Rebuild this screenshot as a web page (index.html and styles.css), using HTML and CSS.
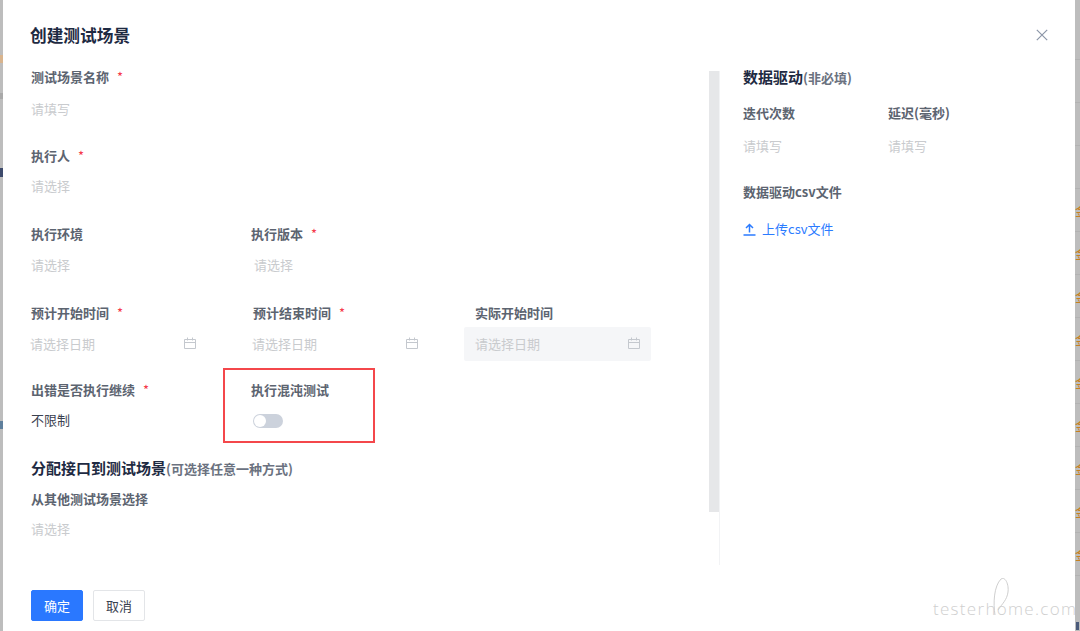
FILE: index.html
```html
<!DOCTYPE html>
<html lang="zh">
<head>
<meta charset="utf-8">
<title>创建测试场景</title>
<link rel="stylesheet" href="styles.css">
</head>
<body>
<div class="page">
  <div class="strip strip-left">
    <i class="mark mark-a"></i><i class="mark mark-b"></i><i class="mark mark-c"></i><i class="mark mark-d"></i>
  </div>
  <div class="modal">
    <header class="modal-head">
      <h1 class="title">创建测试场景</h1>
      <svg class="close" width="12" height="12" viewBox="0 0 12 12"><path d="M.8.8l10.400 10.400M11.200.8L.8 11.200"/></svg>
    </header>
    <div class="modal-body">
      <main class="form">
        <div class="row row-a">
          <div class="field"><div class="label">测试场景名称<span class="req">*</span></div><div class="ph ph-tall">请填写</div></div>
        </div>
        <div class="row row-b">
          <div class="field"><div class="label">执行人<span class="req">*</span></div><div class="ph">请选择</div></div>
        </div>
        <div class="row row-c">
          <div class="field wide"><div class="label">执行环境</div><div class="ph ph-mid">请选择</div></div>
          <div class="field wide"><div class="label">执行版本<span class="req">*</span></div><div class="ph ph-mid shift">请选择</div></div>
        </div>
        <div class="row row-d">
          <div class="field date-field"><div class="label">预计开始时间<span class="req">*</span></div>
            <div class="date"><span>请选择日期</span><svg class="cal" width="12" height="12" viewBox="0 0 12 12"><path d="M.5 2.500h11v9H.5zM.5 5.500h11M3.500.5v3M8.500.5v3"/></svg></div></div>
          <div class="field date-field"><div class="label">预计结束时间<span class="req">*</span></div>
            <div class="date"><span>请选择日期</span><svg class="cal" width="12" height="12" viewBox="0 0 12 12"><path d="M.5 2.500h11v9H.5zM.5 5.500h11M3.500.5v3M8.500.5v3"/></svg></div></div>
          <div class="field date-field"><div class="label">实际开始时间</div>
            <div class="date disabled"><span>请选择日期</span><svg class="cal" width="12" height="12" viewBox="0 0 12 12"><path d="M.5 2.500h11v9H.5zM.5 5.500h11M3.500.5v3M8.500.5v3"/></svg></div></div>
        </div>
        <div class="row row-e">
          <div class="field wide"><div class="label">出错是否执行继续<span class="req">*</span></div><div class="value">不限制</div></div>
          <div class="field wide highlighted"><div class="label">执行混沌测试</div><div class="switch"><span class="knob"></span></div></div>
        </div>
        <h2 class="section">分配接口到测试场景<small>(可选择任意一种方式)</small></h2>
        <div class="field"><div class="label">从其他测试场景选择</div><div class="ph">请选择</div></div>
      </main>
      <div class="scroll"><div class="thumb"></div></div>
      <aside class="side">
        <h2 class="section side-title">数据驱动<small>(非必填)</small></h2>
        <div class="side-row">
          <div class="side-col"><div class="label">迭代次数</div><div class="ph ph-side">请填写</div></div>
          <div class="side-col"><div class="label">延迟(毫秒)</div><div class="ph ph-side">请填写</div></div>
        </div>
        <div class="label">数据驱动csv文件</div>
        <div class="upload">
          <svg width="13" height="13" viewBox="0 0 13 13"><path d="M6.500 9.500V2M3 5l3.500-3.500L10 5M.5 12h12"/></svg>
          <span>上传csv文件</span>
        </div>
      </aside>
    </div>
    <footer class="foot">
      <button class="btn primary">确定</button>
      <button class="btn">取消</button>
    </footer>
    <div class="watermark">
      <svg class="loop" width="20" height="40" viewBox="0 0 20 40"><path d="M5 37C3 25 4 8 11 1c5-3 8 7 7 13-1 8-6 12-10 18"/></svg>
      <span>testerhome.com</span>
    </div>
  </div>
  <div class="strip strip-right">
    <div class="back-row"></div><div class="back-row"></div><div class="back-row"></div><div class="back-row"></div>
    <div class="back-row"><b>金</b></div><div class="back-row"><b>金</b></div><div class="back-row"><b>金</b></div>
    <div class="back-row"><b>金</b></div><div class="back-row"><b>金</b></div><div class="back-row"><b>金</b></div>
    <div class="back-row"><b>金</b></div><div class="back-row"><b>金</b></div><div class="back-row"><b>金</b></div>
    <i class="mark mark-e"></i>
  </div>
</div>
</body>
</html>
```

FILE: styles.css
```css
* { box-sizing: border-box; }
html, body { margin: 0; height: 100%; }
body {
  font-family: "Noto Sans CJK SC", "Noto Sans", sans-serif;
  font-size: 13px;
  color: #5c6470;
  background: #bdbdbd;
  overflow: hidden;
}
.page { display: flex; height: 631px; }
.strip { background: #bdbdbd; overflow: hidden; flex: none; }
.strip-left { width: 3px; display: flex; flex-direction: column; }
.strip-right { width: 5px; padding-top: 17px; }
.mark { display: block; flex: none; }
.mark-a { height: 8px; margin-top: 55px; background: #d8b48e; }
.mark-b { height: 6px; margin-top: 30px; background: #a9a9a9; }
.mark-c { height: 9px; margin-top: 69px; background: #3d4a6b; }
.mark-d { height: 8px; margin-top: 244px; background: #5f7f9c; }
.mark-e { width: 3px; height: 8px; margin: 46px 0 0 1px; background: #4a5a7a; }
.back-row { height: 43px; border-bottom: 1px solid #b2b2b2; padding-top: 14px; line-height: 14px; overflow: hidden; }
.back-row b { display: block; width: 14px; font-size: 14px; font-weight: 400; color: #c8801f; }

.modal { position: relative; flex: 1; background: #fff; display: flex; flex-direction: column; overflow: hidden; }
.modal-head { height: 70px; padding: 23px 27px 0 27px; display: flex; justify-content: space-between; align-items: flex-start; }
.title { margin: 0; font-size: 16.700px; line-height: 24px; font-weight: 700; color: #1e2a42; }
.close { margin-top: 6px; fill: none; stroke: #8c96a8; stroke-width: 1.200; }

.modal-body { flex: 1; display: flex; min-height: 0; }
.form { width: 706px; padding-left: 28px; flex: none; }
.row { display: flex; }
.row-a { height: 79px; }
.row-b { height: 78px; }
.row-c { height: 79px; }
.row-d { height: 77px; }
.row-e { height: 74px; }
.field { display: flex; flex-direction: column; }
.wide { width: 220px; }
.date-field { width: 222px; }
.label { font-size: 13px; line-height: 14px; font-weight: 700; color: #5c6470; white-space: nowrap; }
.req { color: #f5384a; margin-left: 8px; font-weight: 400; }
.ph { margin-top: 13px; line-height: 20px; color: #c9cbce; }
.ph-tall { margin-top: 15px; }
.ph-mid { margin-top: 14px; }
.ph-side { margin-top: 16px; }
.shift { margin-left: 3px; }
.date {
  margin: 7px 0 0 -11px; width: 187px; height: 34px; padding: 0 11px 2px;
  display: flex; align-items: center; justify-content: space-between;
  color: #c9cbce; border-radius: 2px;
}
.date span { margin-left: -1px; }
.date.disabled span { margin-left: 0; }
.date.disabled { background: #f5f6f8; }
.cal { fill: none; stroke: #c4c8ce; stroke-width: 1; }
.value { margin-top: 13px; line-height: 20px; color: #3a4150; }

.highlighted { position: relative; }
.highlighted::before {
  content: ""; box-sizing: border-box; position: absolute; left: -28px; top: -15px; width: 152px; height: 75px;
  border: 2px solid #f4474b;
}
.switch {
  margin: 17px 0 0 2px; width: 30px; height: 14px; border-radius: 7px; background: #ccd2dc; position: relative;
}
.knob { position: absolute; left: 1px; top: 1px; width: 12px; height: 12px; border-radius: 50%; background: #fff; }

.section { margin: 0; font-size: 15px; line-height: 20px; font-weight: 700; color: #1e2a42; white-space: nowrap; }
.section small { font-size: 13px; font-weight: 700; color: #6b7280; }
.form > .section { margin: 1px 0 13px; }

.scroll { width: 11px; flex: none; margin-top: 1px; border-right: 1px solid #f2f3f5; height: 494px; }
.thumb { width: 10px; height: 441px; background: #e6e7e9; }

.side { padding-left: 23px; flex: 1; }
.side-title { margin-top: -3px; margin-bottom: 18px; }
.side-row { display: flex; height: 79px; }
.side-col { width: 145px; }
.upload { display: flex; align-items: center; gap: 6px; margin-top: 20px; line-height: 20px; color: #2b7bff; }
.upload svg { fill: none; stroke: #2b7bff; stroke-width: 1.500; flex: none; }

.foot { height: 66px; padding: 25px 0 0 28px; display: flex; gap: 10px; align-items: flex-start; }
.btn {
  width: 52px; height: 31px; padding: 0; font: inherit; font-size: 13px; color: #3a4150;
  background: #fff; border: 1px solid #e3e5e8; border-radius: 2px;
}
.btn.primary { background: #2a78ff; border-color: #2a78ff; color: #fff; }

.watermark { position: absolute; left: 930px; top: 578px; width: 142px; height: 46px; color: #cfcfcf; overflow: hidden; }
.watermark span {
  position: absolute; left: 0; top: 19px;
  font-family: "Open Sans", sans-serif; font-size: 17px; line-height: 24px; font-weight: 300; letter-spacing: 1.300px; white-space: nowrap;
}
.loop { position: absolute; left: 57px; top: 0; fill: none; stroke: #cfcfcf; stroke-width: 1; }
```
